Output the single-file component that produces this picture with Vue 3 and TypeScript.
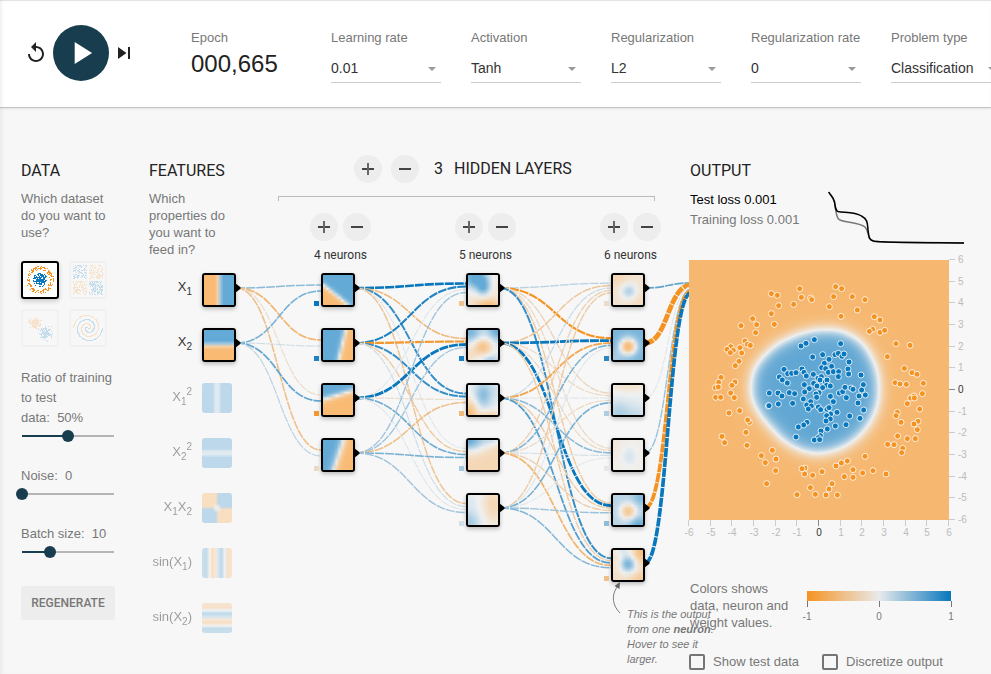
<script setup lang="ts">
import type { ObjectDirective } from 'vue'

type RGB = [number, number, number]
type Field = (x: number, y: number) => number
type Blob = [number, number, number, number, number]

const ORANGE: RGB = [245, 147, 34]
const NEUTRAL: RGB = [232, 234, 235]
const BLUE: RGB = [8, 119, 189]

function scaleColor(value: number): RGB {
  const t = Math.min(1, Math.abs(value))
  const end = value < 0 ? ORANGE : BLUE
  return NEUTRAL.map((c, i) => Math.round(c + (end[i] - c) * t)) as RGB
}
const cssColor = (value: number) => `rgb(${scaleColor(value).join(',')})`

/* Paints a scalar field over the [-6, 6] domain. */
function paint(el: HTMLCanvasElement, field: Field) {
  const ctx = el.getContext('2d')
  if (!ctx) return
  const { width, height } = el
  const image = ctx.createImageData(width, height)
  for (let py = 0; py < height; py++) {
    for (let px = 0; px < width; px++) {
      const x = -6 + (12 * (px + 0.5)) / width
      const y = 6 - (12 * (py + 0.5)) / height
      const o = (py * width + px) * 4
      const [r, g, b] = scaleColor(field(x, y))
      image.data[o] = r
      image.data[o + 1] = g
      image.data[o + 2] = b
      image.data[o + 3] = 160
    }
  }
  ctx.putImageData(image, 0, 0)
}
const vField: ObjectDirective<HTMLCanvasElement, Field> = {
  mounted: (el, binding) => paint(el, binding.value),
}

const blobs = (base: number, list: Blob[]): Field => (x, y) =>
  list.reduce((sum, [a, cx, cy, sx, sy]) => sum + a * Math.exp(-(((x - cx) / sx) ** 2) - ((y - cy) / sy) ** 2), base)

/* Header */
const selects = [
  { label: 'Learning rate', value: '0.01' },
  { label: 'Activation', value: 'Tanh' },
  { label: 'Regularization', value: 'L2' },
  { label: 'Regularization rate', value: '0' },
  { label: 'Problem type', value: 'Classification' },
]

/* Data column */
const sliders = [
  { label: 'Ratio of training to test data:', value: '50%', fill: 50 },
  { label: 'Noise:', value: '0', fill: 0 },
  { label: 'Batch size:', value: '10', fill: 30.5 },
]

let seed = 7
function random() {
  seed = (seed * 16807) % 2147483647
  return seed / 2147483647
}
const gauss = () => random() + random() + random() - 1.5
interface Dot { x: number; y: number; c: string }
const orange = '#f59322'
const blue = '#0877bd'
function dots(n: number, make: () => Dot): Dot[] {
  return Array.from({ length: n }, make).map((d) => ({ x: Math.round(d.x), y: Math.round(d.y), c: d.c }))
}
const circleSet = [
  ...dots(170, () => {
    const a = random() * Math.PI * 2
    const r = 10 + random() * 3.6
    return { x: 16.5 + r * Math.cos(a), y: 16.5 + r * Math.sin(a), c: orange }
  }),
  ...dots(230, () => {
    const a = random() * Math.PI * 2
    const r = random() * 7.2
    return { x: 16.5 + r * Math.cos(a), y: 16.5 + r * Math.sin(a), c: blue }
  }),
]
const xorSet = dots(480, () => {
  let x = (random() * 2 - 1) * 14
  let y = (random() * 2 - 1) * 14
  x += x > 0 ? 1 : -1
  y += y > 0 ? 1 : -1
  return { x: 16.5 + x, y: 16.5 + y, c: x * y > 0 ? blue : orange }
})
const gaussSet = [
  ...dots(150, () => ({ x: 11.5 + gauss() * 5.5, y: 11.5 + gauss() * 5.5, c: orange })),
  ...dots(150, () => ({ x: 22 + gauss() * 5.5, y: 22 + gauss() * 5.5, c: blue })),
]
const spiral = (shift: number, c: string) =>
  Array.from({ length: 220 }, (_, i) => {
    const r = (i / 220) * 14.5
    const t = (1.75 * i * 2 * Math.PI) / 220 + shift
    return { x: Math.round(16.5 + r * Math.sin(t)), y: Math.round(16.5 + r * Math.cos(t)), c }
  })
const datasets = [
  { name: 'circle', active: true, points: circleSet },
  { name: 'xor', active: false, points: xorSet },
  { name: 'gauss', active: false, points: gaussSet },
  { name: 'spiral', active: false, points: [...spiral(0, orange), ...spiral(Math.PI, blue)] },
]

/* Network */
const ROW_TOP = 273
const ROW_STEP = 55
const rowY = (i: number) => ROW_TOP + i * ROW_STEP
const columns = [202, 321, 466, 611]

const features: { base: [string, string][]; sup?: string; wrap?: boolean; active: boolean; field: Field }[] = [
  { base: [['X', '1']], active: true, field: (x) => x },
  { base: [['X', '2']], active: true, field: (_x, y) => y },
  { base: [['X', '1']], sup: '2', active: false, field: (x) => x * x },
  { base: [['X', '2']], sup: '2', active: false, field: (_x, y) => y * y },
  { base: [['X', '1'], ['X', '2']], active: false, field: (x, y) => x * y },
  { base: [['X', '1']], wrap: true, active: false, field: (x) => Math.sin(x) },
  { base: [['X', '2']], wrap: true, active: false, field: (_x, y) => Math.sin(y) },
]

const hidden: { bias: number; field: Field }[][] = [
  [
    { bias: 1, field: (x, y) => Math.tanh((y + 0.8 * x + 2.7) * 0.8) },
    { bias: 0.9, field: (x, y) => Math.tanh((1.6 + 0.23 * y - x) * 0.9) },
    { bias: -0.95, field: (x, y) => Math.tanh((y - 2 - 0.3 * x) * 0.8) },
    { bias: -0.2, field: (x, y) => Math.tanh((0.2 + 0.33 * y - x) * 0.6) },
  ],
  [
    { bias: -0.45, field: blobs(-0.2, [[1.4, -3, 5, 5, 4.5], [0.9, 0.2, 1, 2.6, 3.2], [-0.8, 2, -6.5, 5, 2.8]]) },
    { bias: 0.9, field: blobs(0.15, [[0.9, 6, 6, 4, 4], [0.7, -5, 5, 4, 3.5], [-1, 0, -0.7, 3.8, 3.4], [-0.5, -6, -4, 4, 3], [0.5, 3, -6.5, 3, 2]]) },
    { bias: -0.55, field: blobs(0.05, [[0.7, 0, 2, 3.2, 5], [-1, -6, -5, 4, 5], [-0.7, 3, -6.5, 5, 2.2], [0.15, 5, 4, 3, 4]]) },
    { bias: 0.3, field: blobs(-0.5, [[1.5, -6, 6, 7, 4.5], [0.6, 4, 6.5, 4, 2.8]]) },
    { bias: 0.1, field: blobs(-0.05, [[0.6, -6, -5, 5, 5], [0.15, -5, 4, 4, 4], [-0.45, 4, 2, 4, 7]]) },
  ],
  [
    { bias: -0.15, field: blobs(-0.28, [[0.75, 0.3, -0.5, 3.2, 3.2], [-0.2, -5, 5, 5, 4], [-0.15, 5, -5, 4, 4]]) },
    { bias: 0.85, field: blobs(0.85, [[-2, 0, -0.6, 3.2, 3.2], [-0.3, -5, -5, 3, 3]]) },
    { bias: 0.25, field: blobs(0.05, [[0.4, -4, -5, 5, 4.5], [0.2, 4, -6, 5, 4], [-0.35, 0, 6, 9, 3]]) },
    { bias: -0.03, field: blobs(-0.09, [[0.28, 0.5, -0.5, 3, 4], [-0.1, -6, 5, 4, 4]]) },
    { bias: 0.4, field: blobs(0.4, [[-1.2, 0, -0.6, 3.1, 3.1], [0.6, 4, -6, 3.5, 3], [0.4, 5, 5, 3, 3]]) },
    { bias: -0.5, field: blobs(-0.35, [[-0.6, 5, 5, 3, 4], [1.25, 0, 0.3, 3.2, 3.4], [0.45, -2, 6, 3.5, 2.5], [-0.4, 5, -6, 4, 3]]) },
  ],
]
const heads = [
  { x: 310, text: '4 neurons' },
  { x: 455, text: '5 neurons' },
  { x: 600, text: '6 neurons' },
]

/* weights[layer][source][target] */
const weights = [
  [
    [0.42, -0.6, -0.15, -0.48],
    [0.5, 0.12, 0.6, 0.2],
  ],
  [
    [1.35, -0.55, 0.8, 0.04, -0.42],
    [0.9, -0.95, 0.8, -0.35, 0.12],
    [0.05, 1.5, -0.15, 0.55, 0.05],
    [0.32, 0.32, -0.5, 0.5, 0.33],
  ],
  [
    [0.22, -1.0, -0.25, -0.2, -0.35, 0.8],
    [-0.4, 1.5, -0.2, -0.2, 1.5, -0.35],
    [0.15, -0.75, 0.04, 0.42, -0.35, 0.65],
    [-0.3, 0.48, -0.2, 0.1, -0.3, -0.6],
    [-0.35, 0.05, 0.5, 0.03, 0.35, 0.45],
  ],
  [[0.6], [-3.2], [0.04], [0.35], [-2.3], [2.2]],
]
interface Link { d: string; color: string; width: number }
const links: Link[] = []
weights.forEach((layer, l) => {
  const sx = columns[l] + 34
  const tx = l === 3 ? 691 : columns[l + 1]
  layer.forEach((row, s) => {
    row.forEach((w, t) => {
      const sy = rowY(s) + 15
      const ty = rowY(t) + 15 + ((s - (layer.length - 1) / 2) / layer.length) * 12
      const mx = (sx + tx) / 2
      links.push({
        d: `M${sx},${sy}C${mx},${sy} ${mx},${ty} ${tx},${ty}`,
        color: cssColor(w),
        width: 1 + Math.abs(w) * 1.2,
      })
    })
  })
})
const arrows = [2, 4, 5, 6].flatMap((count, l) =>
  Array.from({ length: count }, (_, i) => {
    const x = columns[l] + 33
    const y = rowY(i) + 15
    return `M${x},${y - 5}L${x + 5.5},${y - 0.7}V${y + 0.7}L${x},${y + 5}Z`
  }),
)

/* Output: radius of the decision boundary by screen angle. */
const contour: [number, number][] = [
  [0, 62], [16, 62], [36, 62], [62, 62.5], [92, 63.4], [120, 60.5], [140, 59], [153, 61], [174, 65.6],
  [186, 66], [198, 66], [216, 62], [242, 58.5], [258, 58.5], [276, 60.5], [294, 63.8], [312, 65], [332, 63.5], [354, 62], [360, 62],
]
const KERNEL = 7
const radii = Array.from({ length: 361 }, (_, deg) => {
  let sum = 0
  for (let k = -KERNEL; k <= KERNEL; k++) {
    const a = (deg + k + 360) % 360
    const i = Math.max(1, contour.findIndex(([c]) => c >= a))
    const [a0, r0] = contour[i - 1]
    const [a1, r1] = contour[i]
    sum += r0 + ((r1 - r0) * (a - a0)) / (a1 - a0)
  }
  return sum / (2 * KERNEL + 1)
})
const outputField: Field = (x, y) => {
  const px = ((x + 6) / 12) * 260 - 128
  const py = ((6 - y) / 12) * 260 - 130
  const deg = ((Math.atan2(py, px) * 180) / Math.PI + 360) % 360
  const lo = Math.floor(deg)
  const r = radii[lo] + (radii[Math.min(360, lo + 1)] - radii[lo]) * (deg - lo)
  return Math.tanh((r - Math.hypot(px, py)) / 8)
}

/* Samples in thirds of a pixel inside the 260 px heat map. */
const outer: [number, number][] = [
  [247, 101], [265, 106], [332, 86], [337, 112], [365, 114], [368, 119], [314, 133], [269, 137], [247, 161], [256, 193],
  [191, 176], [156, 197], [203, 194], [200, 218], [440, 80], [458, 86], [434, 110], [490, 110], [528, 119], [421, 140],
  [505, 150], [456, 169], [556, 170], [573, 180], [551, 208], [541, 214], [573, 217], [587, 211], [621, 251], [663, 256],
  [595, 290], [646, 325], [669, 338], [684, 343], [618, 368], [633, 372], [652, 373], [703, 370], [700, 401], [168, 243],
  [175, 253], [184, 256], [125, 260], [114, 268], [133, 271], [124, 278], [153, 263], [158, 279], [150, 304], [139, 317],
  [96, 352], [89, 367], [138, 366], [129, 376], [79, 383], [88, 381], [125, 399], [80, 412], [95, 412], [136, 413],
  [665, 414], [675, 408], [676, 414], [655, 431], [692, 447], [625, 457], [621, 467], [636, 487], [687, 484], [675, 492],
  [685, 509], [626, 528], [655, 536], [679, 536], [596, 553], [615, 554], [641, 565], [638, 578], [120, 459], [152, 452],
  [181, 487], [176, 480], [171, 517], [99, 529], [107, 548], [174, 556], [250, 571], [217, 587], [261, 597], [229, 608],
  [260, 632], [233, 671], [348, 624], [339, 626], [347, 642], [371, 646], [399, 635], [364, 683], [429, 671], [420, 687],
  [324, 704], [379, 703], [411, 705], [445, 705], [441, 618], [457, 609], [475, 603], [528, 589], [492, 629], [466, 650],
  [492, 652], [521, 639], [552, 632], [591, 642],
]
const inner: [number, number][] = [
  [336, 258], [351, 250], [376, 239], [455, 251], [371, 291], [401, 284], [438, 284], [448, 280], [459, 289], [465, 282],
  [420, 298], [480, 306], [406, 310], [285, 328], [271, 351], [280, 360], [296, 341], [308, 340], [321, 338], [295, 369],
  [339, 327], [345, 337], [352, 348], [398, 323], [410, 326], [428, 319], [373, 343], [387, 355], [397, 350], [418, 337],
  [433, 335], [449, 335], [477, 327], [479, 342], [448, 350], [516, 345], [346, 374], [361, 386], [374, 370], [393, 360],
  [409, 366], [414, 360], [412, 376], [384, 378], [401, 383], [424, 378], [347, 396], [241, 399], [267, 399], [279, 408],
  [301, 398], [317, 401], [390, 398], [381, 402], [451, 399], [461, 395], [468, 382], [486, 384], [492, 388], [523, 374],
  [518, 390], [529, 405], [510, 408], [472, 413], [424, 409], [383, 412], [343, 417], [238, 438], [240, 437], [268, 432],
  [311, 430], [365, 425], [353, 435], [367, 438], [358, 447], [433, 425], [388, 441], [395, 449], [414, 448], [420, 443],
  [425, 462], [444, 457], [413, 467], [424, 477], [411, 483], [482, 468], [507, 429], [524, 450], [513, 475], [471, 494],
  [439, 498], [415, 507], [354, 487], [344, 495], [328, 501], [321, 531], [396, 513], [394, 527], [388, 533], [376, 540],
  [392, 539],
]
const samples = [
  ...outer.map(([x, y]) => ({ x: x / 3, y: y / 3, c: orange })),
  ...inner.map(([x, y]) => ({ x: x / 3, y: y / 3, c: blue })),
]
const ticks = Array.from({ length: 13 }, (_, i) => ({ value: i - 6, at: Math.round((i * 260) / 12) }))
</script>

<template>
  <div class="app">
    <header class="toolbar">
      <div class="controls">
        <svg class="icon" viewBox="0 0 24 24"><path d="M12 5V1L7 6l5 5V7c3.310 0 6 2.690 6 6s-2.690 6-6 6-6-2.690-6-6H4c0 4.420 3.580 8 8 8s8-3.580 8-8-3.580-8-8-8z" /></svg>
        <button class="play"><svg viewBox="0 0 24 24"><path d="M8 5v14l11-7z" /></svg></button>
        <svg class="icon" viewBox="0 0 24 24"><path d="M6 18l8.500-6L6 6v12zM16 6v12h2V6h-2z" /></svg>
      </div>
      <div class="epoch">
        <span class="label">Epoch</span>
        <span class="count">000,665</span>
      </div>
      <div class="selects">
        <div v-for="s in selects" :key="s.label" class="select">
          <span class="label">{{ s.label }}</span>
          <div class="value"><span>{{ s.value }}</span><i class="caret" /></div>
        </div>
      </div>
    </header>

    <main class="main">
      <section class="data">
        <h4>Data</h4>
        <p>Which dataset do you want to use?</p>
        <div class="datasets">
          <div v-for="d in datasets" :key="d.name" class="dataset" :class="{ active: d.active }">
            <svg viewBox="0 0 34 34">
              <rect v-for="(p, i) in d.points" :key="i" :x="p.x" :y="p.y" width="1" height="1" :fill="p.c" />
            </svg>
          </div>
        </div>
        <div v-for="s in sliders" :key="s.label" class="slider">
          <div class="slider-label">{{ s.label }}&nbsp;&nbsp;{{ s.value }}</div>
          <div class="track">
            <div class="fill" :style="{ width: s.fill + '%' }"><i class="thumb" /></div>
          </div>
        </div>
        <button class="regenerate">Regenerate</button>
      </section>

      <section class="features">
        <h4>Features</h4>
        <p>Which properties do you want to feed in?</p>
      </section>

      <section class="hidden">
        <div class="hidden-title">
          <button class="round plus" /><button class="round" />
          <span class="layers">3</span><span>Hidden layers</span>
        </div>
        <div class="bracket" />
        <div class="heads">
          <div v-for="h in heads" :key="h.x" class="head">
            <div class="pair"><button class="round plus" /><button class="round" /></div>
            <span>{{ h.text }}</span>
          </div>
        </div>
      </section>

      <section class="output">
        <h4>Output</h4>
        <div class="losses">
          <div class="loss">
            <div class="test">Test loss 0.001</div>
            <div>Training loss 0.001</div>
          </div>
          <svg class="chart" width="138" height="56" viewBox="827 190 138 56">
            <path stroke="#777" d="M828.700,192C831,196 833.500,197 834.500,202C836,211 836,216 838.500,219C842,223 858,221.500 865,227C868,230 868,234 869,237C871,242 876,241.500 887,242L964,243" />
            <path stroke="#000" d="M828.700,192C831,196 833.500,197 834.500,202C835.500,208 835.500,210.500 838,211.500C843,213 854,211 861.500,216C867,219 867.500,222 868,230C869,238 869,240 874,241.200C881,242.500 905,242.500 964,243" />
          </svg>
        </div>
        <div class="plot">
          <div class="heatmap">
            <canvas v-field="outputField" width="260" height="260" />
            <svg width="260" height="260">
              <circle v-for="(p, i) in samples" :key="i" :cx="p.x" :cy="p.y" r="3" :fill="p.c" />
            </svg>
          </div>
          <svg class="y-axis" width="30" height="276">
            <g v-for="t in ticks" :key="t.value" :class="{ zero: t.value === 0 }">
              <path :d="`M0,${260 - t.at + 7.500}h6`" />
              <text x="9" :y="260 - t.at + 11">{{ t.value }}</text>
            </g>
          </svg>
          <svg class="x-axis" width="276" height="22">
            <g v-for="t in ticks" :key="t.value" :class="{ zero: t.value === 0 }">
              <path :d="`M${t.at + 7.500},0v6`" />
              <text text-anchor="middle" :x="t.at + 8" y="16">{{ t.value }}</text>
            </g>
          </svg>
        </div>
        <div class="legend">
          <p>Colors shows data, neuron and weight values.</p>
          <div class="scale">
            <div class="bar" />
            <div class="marks"><span>-1</span><span>0</span><span>1</span></div>
          </div>
        </div>
        <div class="checks">
          <label><i class="box" />Show test data</label>
          <label><i class="box" />Discretize output</label>
        </div>
      </section>
    </main>

    <div class="diagram">
      <svg class="links" width="689" height="674">
        <path v-for="(l, i) in links" :key="i" :d="l.d" :stroke="l.color" :stroke-width="l.width" />
        <path v-for="a in arrows" :key="a" :d="a" class="arrow" />
      </svg>
      <div v-for="(f, i) in features" :key="i" class="feature" :class="{ active: f.active }" :style="{ top: rowY(i) + 'px' }">
        <span class="name"><template v-if="f.wrap">sin(</template><template v-for="b in f.base" :key="b[1]">{{ b[0] }}<sub>{{ b[1] }}</sub></template><sup v-if="f.sup">{{ f.sup }}</sup><template v-if="f.wrap">)</template></span>
        <div class="node"><canvas v-field="f.field" width="10" height="10" /></div>
      </div>
      <template v-for="(layer, l) in hidden" :key="l">
        <div v-for="(n, i) in layer" :key="i" class="neuron" :style="{ left: columns[l + 1] + 'px', top: rowY(i) + 'px' }">
          <div class="node"><canvas v-field="n.field" width="10" height="10" /></div>
          <i class="bias" :style="{ background: cssColor(n.bias) }" />
        </div>
      </template>
      <div class="callout">
        <svg width="16" height="36" viewBox="0 0 16 36">
          <path d="M8,32C-1,23 0,12 6,5" fill="none" stroke="#777" />
          <path d="M8,1L2.500,5L7.500,8Z" fill="#666" />
        </svg>
        <div>This is the output from one <b>neuron</b>. Hover to see it larger.</div>
      </div>
    </div>
  </div>
</template>

<style>
body {
  background: #f7f7f7;
  overflow: hidden;
}
</style>

<style scoped>
.app {
  position: relative;
  width: 991px;
  height: 674px;
  overflow: hidden;
  background: #f7f7f7;
  color: #777;
  font: 13px/17px "Liberation Sans", Arial, sans-serif;
  box-shadow: inset 4px 0 4px -3px rgba(0, 0, 0, 0.08);
}
.app *,
.app *::before,
.app *::after {
  box-sizing: border-box;
}
button {
  border: 0;
  padding: 0;
  font-family: Roboto, sans-serif;
}
p {
  margin: 0;
}
h4 {
  margin: 0;
  padding-top: 1px;
  font: 400 16px/20px Roboto, sans-serif;
  color: #222;
  text-transform: uppercase;
}

.toolbar {
  display: flex;
  height: 107px;
  background: #fff;
  box-shadow: 0 1px 1px rgba(0, 0, 0, 0.16), 0 2px 3px rgba(0, 0, 0, 0.06), inset 0 1px 1px rgba(0, 0, 0, 0.12), inset 4px 0 4px -3px rgba(0, 0, 0, 0.08);
}
.controls {
  display: flex;
  flex: none;
  align-items: center;
  width: 191px;
  height: 106px;
  padding-left: 24px;
}
.icon {
  width: 24px;
  height: 24px;
  fill: #222;
}
.play {
  display: flex;
  align-items: center;
  justify-content: center;
  width: 56px;
  height: 56px;
  margin: 0 4px 0 5px;
  border-radius: 50%;
  background: #183d4e;
}
.play svg {
  width: 38px;
  height: 38px;
  margin-right: 1px;
  fill: #fff;
}
.controls .icon:last-child {
  margin-left: -1px;
}
.label {
  display: block;
  line-height: 17px;
  white-space: nowrap;
}
.epoch {
  flex: none;
  width: 140px;
  padding-top: 29px;
}
.count {
  display: block;
  margin-top: 4px;
  font-size: 24px;
  line-height: 28px;
  color: #222;
}
.selects {
  display: flex;
  flex: none;
  gap: 30px;
  padding-top: 29px;
}
.select {
  flex: none;
  width: 110px;
}
.value {
  display: flex;
  align-items: center;
  justify-content: space-between;
  height: 29px;
  margin-top: 8px;
  padding: 0 5px 0 0;
  border-bottom: 1px solid #ccc;
  font-size: 14px;
  color: #333;
}
.caret {
  margin-top: 1px;
  border: 4.5px solid transparent;
  border-top-color: #999;
  border-bottom-width: 0;
}

.main {
  display: flex;
  padding: 53px 0 0 21px;
}
.data {
  width: 94px;
  margin-right: 34px;
}
.data > p,
.features > p {
  margin-top: 9px;
}
.datasets {
  display: grid;
  grid-template-columns: 38px 38px;
  gap: 10px;
  margin-top: 20px;
}
.dataset {
  height: 38px;
  border: 2px solid rgba(0, 0, 0, 0.1);
  border-radius: 3px;
  opacity: 0.2;
}
.dataset svg {
  display: block;
  width: 34px;
  height: 34px;
  shape-rendering: crispEdges;
}
.dataset.active {
  border-color: #000;
  background: #fff;
  opacity: 1;
  box-shadow: 0 2px 5px rgba(0, 0, 0, 0.2);
}
.slider + .slider {
  margin-top: 29px;
}
.datasets + .slider {
  margin-top: 21px;
}
.slider-label {
  line-height: 20px;
}
.track {
  width: 92px;
  height: 2px;
  margin: 7px 0 0 1px;
  background: #b5b5b5;
}
.fill {
  display: flex;
  align-items: center;
  justify-content: flex-end;
  height: 2px;
  background: #183d4e;
}
.thumb {
  flex: none;
  width: 12px;
  height: 12px;
  margin-right: -6px;
  border-radius: 50%;
  background: #183d4e;
}
.regenerate {
  width: 94px;
  height: 34px;
  margin-top: 33px;
  border-radius: 3px;
  background: #ededed;
  color: #777;
  font-size: 12px;
  font-weight: 500;
  text-transform: uppercase;
}
.features {
  width: 80px;
  margin-right: 49px;
}
.hidden {
  width: 377px;
  margin: -5px 34px 0 0;
}
.hidden-title {
  display: flex;
  align-items: center;
  padding-left: 76px;
  font: 400 16px/28px Roboto, sans-serif;
  color: #222;
  text-transform: uppercase;
}
.hidden-title .plus {
  margin-right: 9px;
}
.layers {
  margin: 0 11px 0 15px;
}
.round {
  display: grid;
  place-items: center;
  width: 28px;
  height: 28px;
  border-radius: 50%;
  background: #ededed;
}
.round::before,
.round.plus::after {
  grid-area: 1 / 1;
  width: 12px;
  height: 2px;
  background: #444;
  content: "";
}
.round.plus::after {
  width: 2px;
  height: 12px;
  background: #666;
}
.bracket {
  height: 5px;
  margin-top: 13px;
  border: 1px solid #bbb;
  border-bottom: 0;
}
.heads {
  display: flex;
  gap: 84px;
  margin: 12px 0 0 32px;
}
.head {
  flex: none;
  width: 61px;
  font: 12px/14px Roboto, sans-serif;
  color: #333;
  text-align: center;
}
.pair {
  display: flex;
  gap: 5px;
  margin-bottom: 7px;
}

.output {
  width: 302px;
}
.output h4 {
  padding-left: 1px;
}
.losses {
  display: flex;
  margin-top: 9px;
  line-height: 20px;
}
.loss {
  width: 138px;
  padding-left: 1px;
  white-space: nowrap;
}
.test {
  color: #000;
}
.chart {
  flex: none;
  fill: none;
  stroke-width: 1.5;
}
.plot {
  display: grid;
  grid-template-columns: 260px 42px;
  margin-top: 14px;
}
.heatmap {
  position: relative;
  height: 260px;
}
.heatmap canvas,
.heatmap svg {
  position: absolute;
  inset: 0;
}
.heatmap circle {
  stroke: #fff;
  stroke-opacity: 0.8;
}
.y-axis {
  margin: -8px 0 -8px;
}
.x-axis {
  grid-column: 1 / -1;
  margin-left: -8px;
}
.plot g path {
  stroke: #ccc;
}
.plot g text {
  fill: #bbb;
  font-size: 10px;
}
.plot g.zero path {
  stroke: #888;
}
.plot g.zero text {
  fill: #333;
}
.legend {
  display: flex;
  margin-top: 38px;
}
.legend p {
  width: 118px;
  padding-left: 1px;
  padding-right: 10px;
}
.scale {
  width: 144px;
  padding-top: 11px;
}
.bar {
  height: 10px;
  background: linear-gradient(90deg, #f59322, #e8eaeb, #0877bd);
}
.marks {
  display: flex;
  justify-content: space-between;
  margin: 0 -9px;
  font-size: 10px;
  line-height: 12px;
}
.marks span {
  width: 18px;
  text-align: center;
}
.marks span::before {
  display: block;
  width: 1px;
  height: 6px;
  margin: 0 auto 4px;
  background: #777;
  content: "";
}
.checks {
  display: flex;
  gap: 23px;
  margin-top: 22px;
}
.checks label {
  display: flex;
  align-items: center;
  white-space: nowrap;
}
.box {
  width: 16px;
  height: 16px;
  margin-right: 8px;
  border: 2px solid #757575;
  border-radius: 2px;
}

.diagram {
  position: absolute;
  inset: 0 auto auto 0;
  width: 689px;
  height: 674px;
}
.links {
  position: absolute;
  inset: 0;
  fill: none;
  stroke-dasharray: 9 1;
}
.arrow {
  fill: #000;
}
.feature {
  position: absolute;
  left: 142px;
  display: flex;
  align-items: flex-start;
  justify-content: flex-end;
  width: 90px;
  opacity: 0.4;
}
.feature.active {
  width: 94px;
  opacity: 1;
}
.name {
  margin: 4px 10px 0 0;
  font-size: 13px;
  line-height: 20px;
  color: #333;
  white-space: nowrap;
}
.feature:not(.active) .name {
  color: #111;
}
.name sub,
.name sup {
  font-size: 10px;
  line-height: 0;
}
.name sub {
  vertical-align: -4px;
}
.name sup {
  vertical-align: 6px;
}
.node {
  flex: none;
  overflow: hidden;
  border-radius: 3px;
  background: #fff;
}
.node canvas {
  display: block;
  width: 30px;
  height: 30px;
}
.neuron .node,
.feature.active .node {
  border: 2px solid #000;
  box-shadow: 0 2px 4px rgba(0, 0, 0, 0.25);
}
.neuron {
  position: absolute;
}
.bias {
  position: absolute;
  left: -7px;
  top: 28px;
  width: 5px;
  height: 5px;
}
.callout {
  position: absolute;
  left: 612px;
  top: 581px;
  width: 110px;
  font-size: 11px;
  font-style: italic;
  line-height: 15px;
}
.callout div {
  margin: -10px 0 0 15px;
}
.callout svg {
  display: block;
}
</style>
